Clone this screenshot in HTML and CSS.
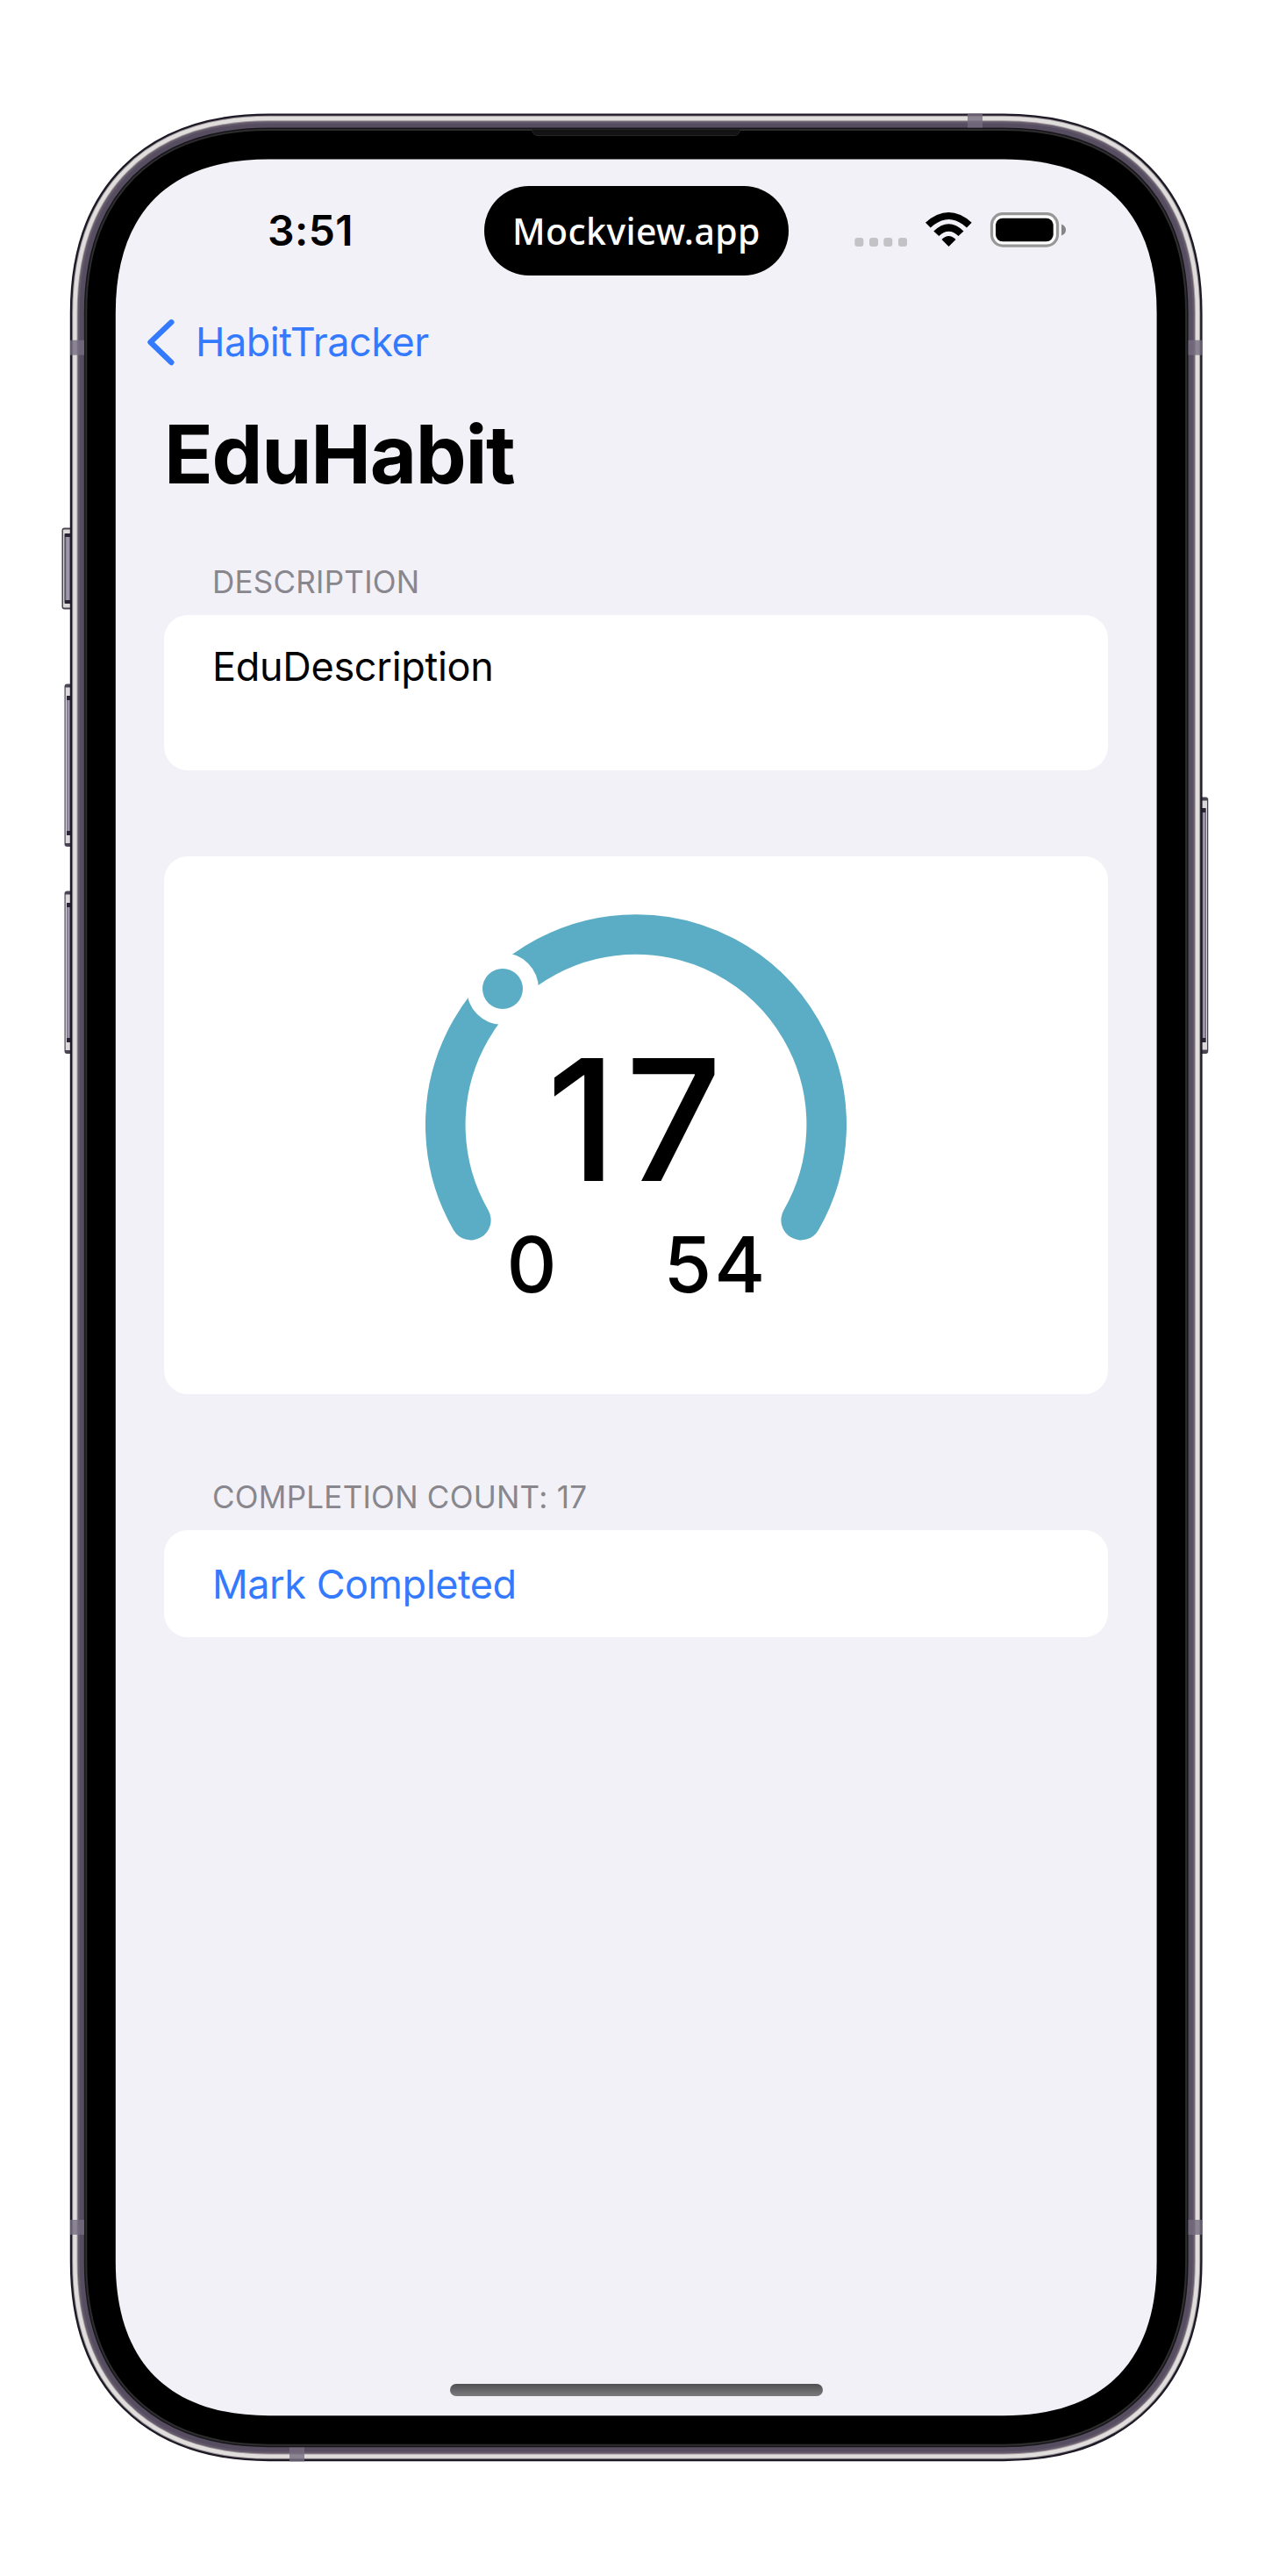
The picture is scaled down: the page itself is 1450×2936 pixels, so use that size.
FILE: index.html
```html
<!DOCTYPE html>
<html lang="en">
<head>
<meta charset="utf-8">
<title>EduHabit</title>
<link rel="stylesheet" href="styles.css">
</head>
<body>
<div class="stage">
  <svg class="phone" viewBox="0 0 1450 2936" aria-hidden="true">
    <defs>
      <path id="outline" d="M306.6 181.4H1143.8C1257.6 181.4 1318.6 242.6 1318.6 356.4V2578.2C1318.6 2692 1257.6 2753.2 1143.8 2753.2H306.6C192.8 2753.2 131.8 2692 131.8 2578.2V356.4C131.8 242.6 192.8 181.4 306.6 181.4Z"/>
      <linearGradient id="key" x1="0" x2="1" y1="0" y2="0">
        <stop offset="0" stop-color="#84808f"/><stop offset=".5" stop-color="#a59db3"/><stop offset="1" stop-color="#6f697c"/>
      </linearGradient>
    </defs>
    <g class="keys">
      <g><rect class="key-edge" x="70.500" y="601.500" width="18" height="93" rx="3"/><rect class="key-shine" x="72" y="603.500" width="14" height="89" rx="1"/><rect class="key-dark" x="73.500" y="608" width="12" height="80" rx="1"/><rect fill="url(#key)" x="74.500" y="612" width="6" height="72"/></g>
      <g><rect class="key-edge" x="73.500" y="779.500" width="14" height="185.500" rx="3"/><rect class="key-shine" x="74.700" y="783.500" width="11" height="177.500"/><rect class="key-dark" x="76" y="793" width="8" height="159"/><rect fill="url(#key)" x="76.200" y="798" width="4" height="149"/></g>
      <g><rect class="key-edge" x="73.500" y="1015.500" width="14" height="185.500" rx="3"/><rect class="key-shine" x="74.700" y="1019.500" width="11" height="177.500"/><rect class="key-dark" x="76" y="1029" width="8" height="159"/><rect fill="url(#key)" x="76.200" y="1034" width="4" height="149"/></g>
      <g><rect class="key-edge" x="1363.300" y="908.500" width="14" height="292.500" rx="3"/><rect class="key-shine" x="1364" y="912.500" width="12" height="284"/><rect class="key-dark" x="1366" y="921" width="8.700" height="267"/><rect fill="url(#key)" x="1370.500" y="926" width="4.200" height="257"/></g>
    </g>
    <g class="rim">
      <use href="#outline" stroke="#1d1925" stroke-width="104"/>
      <use href="#outline" stroke="#9b9298" stroke-width="99.200"/>
      <use href="#outline" stroke="#e0dedc" stroke-width="97.200"/>
      <use href="#outline" stroke="#a3979b" stroke-width="88.400"/>
      <use href="#outline" stroke="#635a6c" stroke-width="86.400"/>
      <use href="#outline" stroke="#564e60" stroke-width="82"/>
      <use href="#outline" stroke="#17151a" stroke-width="72"/>
      <use href="#outline" stroke="#2d2d2e" stroke-width="69"/>
      <use href="#outline" stroke="#000" stroke-width="65"/>
    </g>
    <g class="bands">
      <rect x="80" y="387.700" width="16" height="17"/><rect x="1354.500" y="387.700" width="16" height="17"/>
      <rect x="80" y="2530" width="16" height="17"/><rect x="1354.500" y="2530" width="16" height="17"/>
      <rect x="1103" y="129.500" width="17" height="16"/><rect x="330" y="2789.500" width="17" height="16"/>
    </g>
    <path d="M606 147.500H844Q842.500 154.500 837 154.500H613Q607.500 154.500 606 147.500Z" fill="#131313" stroke="#262626"/>
    <use href="#outline" fill="#f2f1f7"/>
  </svg>

  <main class="screen">
    <header class="status">
      <span class="time">3:51</span>
      <span class="island"><span class="brand">Mockview.app</span></span>
      <svg class="indicators" viewBox="0 0 246 44" aria-hidden="true">
        <g fill="#c3c2c7"><rect x="4.300" y="30" width="10" height="10" rx="3"/><rect x="21" y="30" width="10" height="10" rx="3"/><rect x="37.300" y="30" width="10" height="10" rx="3"/><rect x="54" y="30" width="10" height="10" rx="3"/></g>
        <path d="M85 12.700Q111.500 -10.500 137.700 12.700L132 18.500Q111.500 -.5 90.700 18.500Z"/>
        <path d="M94.300 22.500Q111.500 6 128.500 22.500L122.500 28Q111.500 17.500 100.300 28Z"/>
        <path d="M103.500 32Q111.500 24 119.500 32L111.500 40Z"/>
        <rect x="160.500" y="2.700" width="75" height="36.400" rx="12.500" fill="#fcfcfd" stroke="#979797" stroke-width="3.200"/>
        <rect x="165" y="7.700" width="65.700" height="26.600" rx="8"/>
        <path d="M240 14.500Q245 16.500 245 21T240 27.500Z" fill="#858585"/>
      </svg>
    </header>
    <nav class="back">
      <svg class="chevron" viewBox="0 0 32 54" aria-hidden="true"><path d="M27.300 4.300L3.500 27L27.300 50"/></svg>
      <span class="back-label">HabitTracker</span>
    </nav>
    <h1 class="title">EduHabit</h1>
    <h2 class="caption cap-desc">DESCRIPTION</h2>
    <section class="card card-desc"><p class="body desc">EduDescription</p></section>
    <section class="card card-gauge">
      <svg class="gauge" viewBox="0 0 480 450">
        <path class="arc" d="M51.800 348.600A217.200 217.200 0 1 1 428.200 348.600"/>
        <circle cx="88" cy="85" r="41" fill="#fff"/>
        <circle cx="88" cy="85" r="23" fill="#5aadc4"/>
        <text class="value" x="138" y="303.500">17</text>
        <text class="bound" x="92.500" y="430.500">0</text>
        <text class="bound" x="271.500" y="430.500">54</text>
      </svg>
    </section>
    <h2 class="caption cap-count">COMPLETION COUNT: 17</h2>
    <section class="card card-action"><span class="body action">Mark Completed</span></section>
    <div class="home"></div>
  </main>
</div>
</body>
</html>
```
FILE: styles.css
```css
body { margin: 0; background: #fff; }
.stage { position: relative; box-sizing: border-box; width: 1450px; height: 2936px; padding: 181px 131px 183px 132px; font-family: Inter, "Liberation Sans", sans-serif; color: #000; }
.phone { position: absolute; left: 0; top: 0; width: 1450px; height: 2936px; }
.rim use { fill: none; }
.bands rect { fill: #756d80; opacity: .8; }
.key-edge { fill: #4a4453; }
.key-shine { fill: #dcd9da; }
.key-dark { fill: #2a2533; }

.screen { position: relative; display: flex; flex-direction: column; box-sizing: border-box; width: 1187px; height: 2572px; padding: 31px 55px 0; }
.screen > *, h1, h2, p { margin: 0; }
.status { display: flex; flex: none; align-items: center; height: 102px; }
.time { width: 247px; margin-left: 118px; font-size: 48px; font-weight: 600; line-height: 102px; letter-spacing: .4px; }
.island { display: flex; align-items: center; justify-content: center; width: 347px; height: 102px; border-radius: 51px; background: #000; }
.brand { font: 500 41px/100px "Noto Sans", sans-serif; letter-spacing: .4px; color: #fff; }
.indicators { width: 246px; height: 44px; margin-left: 71px; }

.back { display: flex; align-items: center; height: 54px; margin-top: 49px; margin-left: -19px; }
.chevron { width: 32px; height: 54px; fill: none; stroke: #347aff; stroke-width: 6.4; stroke-linecap: round; stroke-linejoin: round; }
.back-label { margin-left: 23px; font-size: 45px; line-height: 54px; letter-spacing: -.5px; color: #347aff; }
.title { margin-top: 46px; font-size: 92px; font-weight: 700; line-height: 110px; letter-spacing: -1.3px; }
.caption { margin-left: 55px; font-size: 35px; font-weight: 400; line-height: 42px; letter-spacing: .25px; color: #88878d; white-space: nowrap; }
.card { box-sizing: border-box; flex: none; width: 1076px; border-radius: 27px; background: #fff; }
.body { font-size: 45px; line-height: 54px; }
.cap-desc { margin-top: 69px; }
.card-desc { height: 177px; margin-top: 17px; padding: 32px 55px; }
.desc { letter-spacing: -.3px; }
.card-gauge { display: flex; justify-content: center; height: 613px; margin-top: 98px; padding-top: 66px; }
.gauge { width: 480px; height: 450px; }
.arc { fill: none; stroke: #5aadc4; stroke-width: 45.6; stroke-linecap: round; }
.value { font-size: 192.5px; font-weight: 500; letter-spacing: 10px; }
.bound { font-size: 88.5px; font-weight: 500; letter-spacing: 3px; }
.cap-count { margin-top: 96px; }
.card-action { height: 122px; margin-top: 17px; padding: 35px 55px; }
.action { letter-spacing: -.45px; color: #347aff; }
.home { width: 425px; height: 14px; margin: auto 0 22px 326px; border-radius: 7px; background: linear-gradient(#505052, #7b7b7d); }
```
